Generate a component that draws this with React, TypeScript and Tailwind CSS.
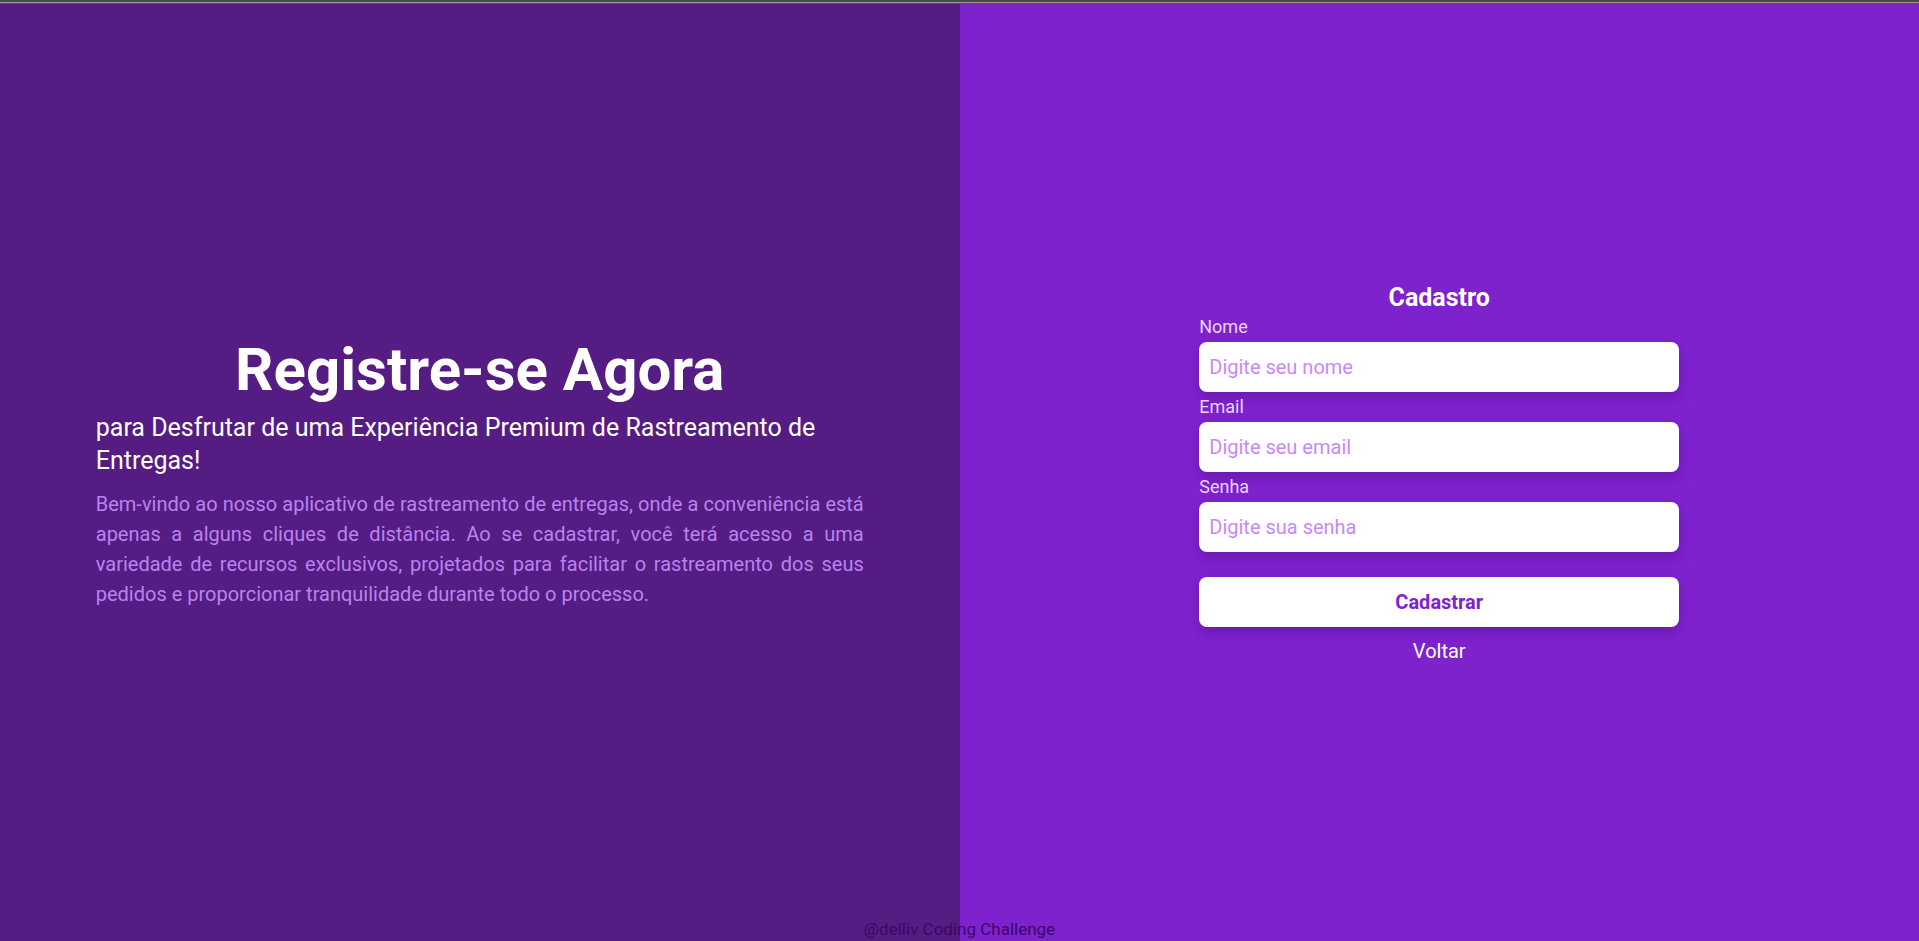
import React from "react";

const fields = [
  { label: "Nome", type: "text", placeholder: "Digite seu nome" },
  { label: "Email", type: "email", placeholder: "Digite seu email" },
  { label: "Senha", type: "password", placeholder: "Digite sua senha" },
];

export default function App() {
  return (
    <div className="relative flex h-[941px] w-full flex-col font-['Roboto',sans-serif]">
      {/* faixa cinza no topo */}
      <div className="h-[2px] bg-[#4b4b4b]" />
      <div className="h-[1px] bg-[#9a9a8c]" />
      <div className="h-[1px] bg-[#555555]" />

      <div className="flex flex-1">
        {/* Lado esquerdo */}
        <section className="flex w-1/2 items-center justify-center bg-[#551c83] pt-[4px]">
          <div className="w-full max-w-3xl">
            <h1 className="mb-[11px] text-center text-6xl font-bold text-white">
              Registre-se Agora
            </h1>
            <h2 className="text-[25px] leading-[33px] text-white">
              para Desfrutar de uma Experiência Premium de Rastreamento de Entregas!
            </h2>
            <p className="mt-[12px] text-justify text-xl leading-[30px] text-[#b983ef]">
              Bem-vindo ao nosso aplicativo de rastreamento de entregas, onde a conveniência está
              apenas a alguns cliques de distância. Ao se cadastrar, você terá acesso a uma
              variedade de recursos exclusivos, projetados para facilitar o rastreamento dos seus
              pedidos e proporcionar tranquilidade durante todo o processo.
            </p>
          </div>
        </section>

        {/* Lado direito - formulário */}
        <section className="flex w-1/2 items-center justify-center bg-[#7e22ce] pt-[4px]">
          <form className="flex w-[480px] flex-col" onSubmit={(e) => e.preventDefault()}>
            <h3 className="text-center text-[25px] font-bold leading-[28px] text-white">Cadastro</h3>
            {fields.map((f) => (
              <div key={f.label} className="flex flex-col">
                <label className="text-lg leading-[30px] text-[#e9d5ff]">{f.label}</label>
                <input
                  type={f.type}
                  placeholder={f.placeholder}
                  className="h-[50px] rounded-lg bg-white px-[10px] text-xl text-[#6b21a8] shadow-[0_6px_14px_rgba(70,10,120,0.35)] outline-none placeholder:text-[#c58af9]"
                />
              </div>
            ))}
            <button
              type="submit"
              className="mt-[25px] h-[50px] rounded-lg bg-white text-xl font-bold text-[#7e22ce] shadow-[0_6px_14px_rgba(70,10,120,0.35)]"
            >
              Cadastrar
            </button>
            <button type="button" className="mt-[10px] text-center text-xl leading-[28px] text-white">
              Voltar
            </button>
          </form>
        </section>
      </div>

      <footer className="absolute bottom-0 left-0 right-0 text-center text-[17px] leading-6 text-[#3b0764]">
        @delliv Coding Challenge
      </footer>
    </div>
  );
}
